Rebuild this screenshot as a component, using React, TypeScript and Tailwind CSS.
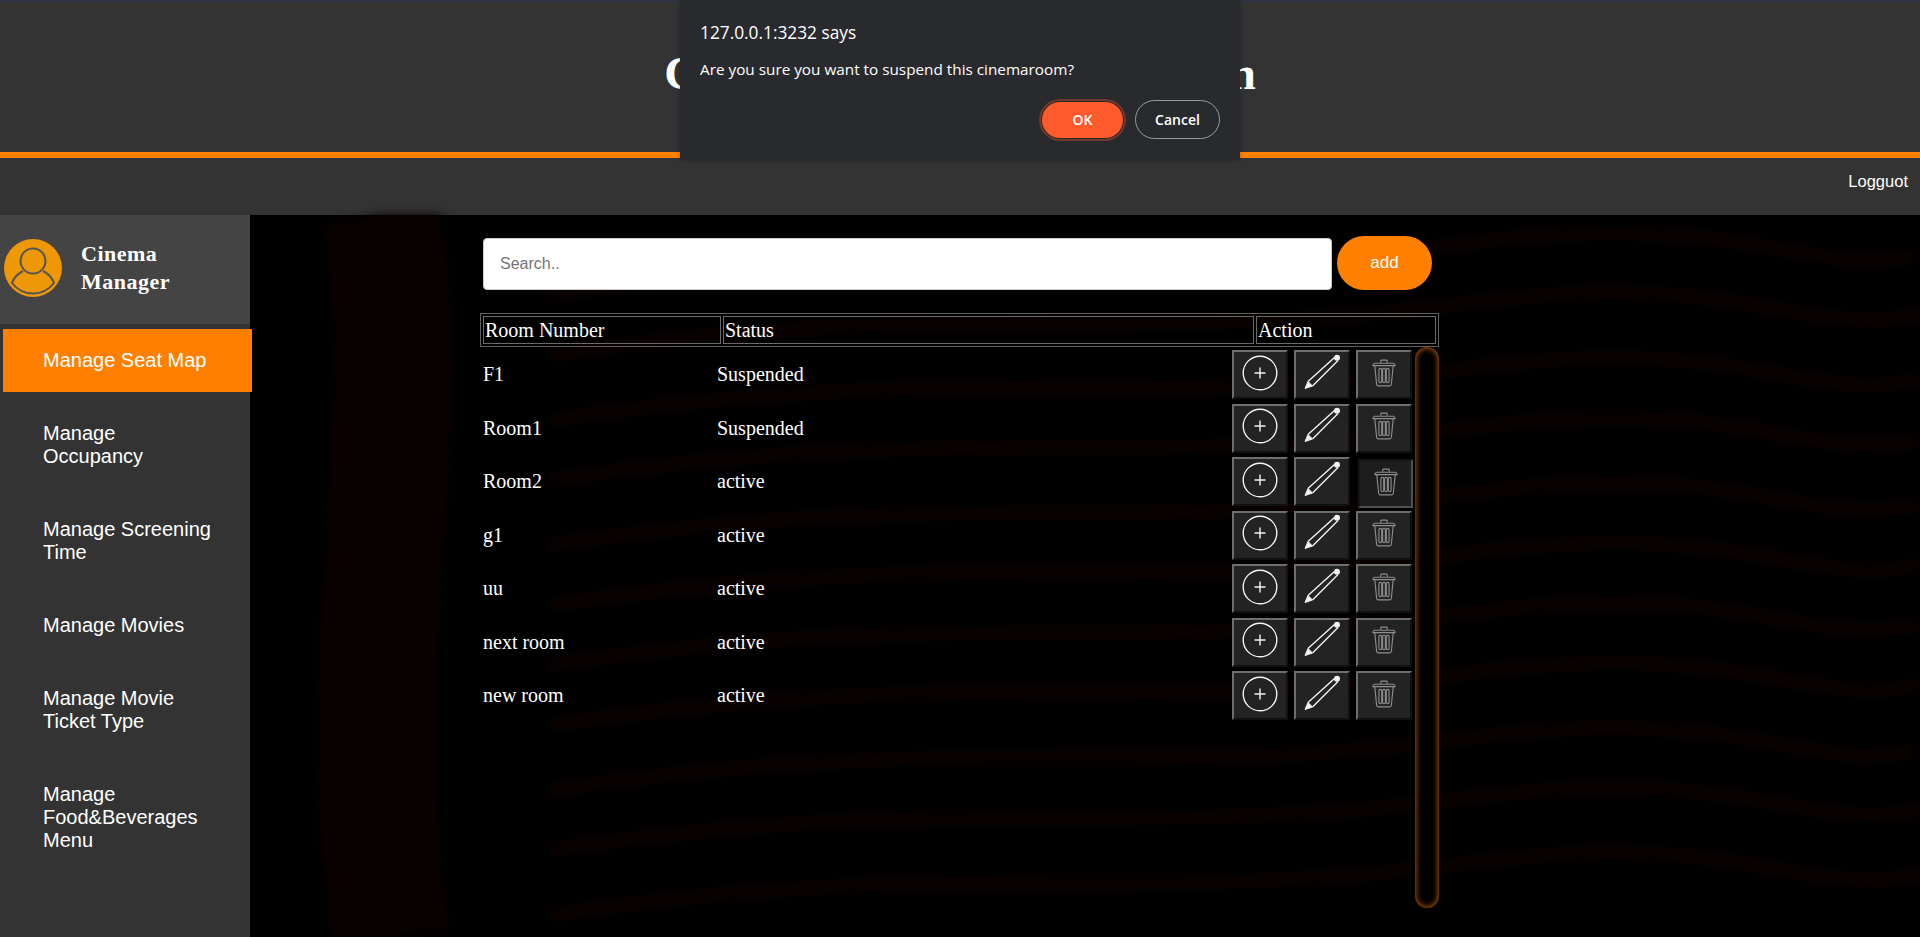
import React from 'react'

const menuItems = [
  'Manage Seat Map',
  'Manage Occupancy',
  'Manage Screening Time',
  'Manage Movies',
  'Manage Movie Ticket Type',
  'Manage Food&Beverages Menu',
]

const rooms = [
  { name: 'F1', status: 'Suspended' },
  { name: 'Room1', status: 'Suspended' },
  { name: 'Room2', status: 'active', pressed: true },
  { name: 'g1', status: 'active' },
  { name: 'uu', status: 'active' },
  { name: 'next room', status: 'active' },
  { name: 'new room', status: 'active' },
]

function PlusIcon() {
  return (
    <svg width="38" height="38" viewBox="0 0 38 38" fill="none" stroke="#f2f2f2">
      <circle cx="19" cy="19" r="16.8" strokeWidth="1.4" />
      <path d="M19 13.500v11M13.500 19h11" strokeWidth="1.4" />
    </svg>
  )
}

function PencilIcon() {
  return (
    <svg width="40" height="40" viewBox="0 0 40 40" fill="none" stroke="#f2f2f2">
      <path d="M6 28.500L32.500 4.500M10.500 33L36 7.500" strokeWidth="1.4" />
      <path d="M3 35.500L6 28.500L10.500 33z" fill="#f2f2f2" strokeWidth="1" strokeLinejoin="round" />
      <circle cx="35" cy="4.800" r="3" fill="#f2f2f2" stroke="none" />
    </svg>
  )
}

function TrashIcon() {
  return (
    <svg width="24" height="28" viewBox="0 0 26 30" fill="none" stroke="#8e8e8e" strokeWidth="1.2">
      <path d="M1 7c0-1.500 1-2.300 2-2.500l20-.1c1 .2 2 1 2 2.600z" />
      <path d="M9.500 4V2c0-.6.4-1 1-1h5c.6 0 1 .4 1 1v2" />
      <path d="M3 7l2 20c.1 1.200 1 2 2 2h12c1 0 1.900-.8 2-2l2-20" />
      <rect x="7.500" y="10" width="3" height="15.500" rx="1.500" />
      <rect x="11.500" y="10" width="3" height="15.500" rx="1.500" />
      <rect x="15.500" y="10" width="3" height="15.500" rx="1.500" />
    </svg>
  )
}

function ActionButton({ children, pressed }: { children: React.ReactNode; pressed?: boolean }) {
  return (
    <button
      className={`flex h-[49px] shrink-0 items-center justify-center border-2 pb-[4px] ${
        pressed
          ? 'ml-[2px] mt-[2px] w-[55px] border-t-[#141414] border-l-[#141414] border-r-[#505050] border-b-[#505050] bg-[#1d1d1d]'
          : 'w-[56px] border-t-[#6e6e6e] border-l-[#6e6e6e] border-r-[#101010] border-b-[#101010] bg-[#232323]'
      }`}
    >
      {children}
    </button>
  )
}

function Waves() {
  const lines = [40, 100, 165, 225, 290, 350, 410, 470, 535, 595, 660]
  return (
    <svg className="absolute inset-0 h-full w-full blur-[5px]" viewBox="0 0 1670 722" preserveAspectRatio="none" fill="none">
      {lines.map((y, i) => (
        <path
          key={i}
          d={`M300 ${y + 40} C 700 ${y - 20}, 900 ${y + 30}, 1200 ${y - 10} S 1550 ${y + 25}, 1670 ${y}`}
          stroke="#0b0200"
          strokeWidth="10"
        />
      ))}
      <path d="M130 0 C 170 200, 100 420, 140 722" stroke="#080100" strokeWidth="120" />
    </svg>
  )
}

export default function App() {
  return (
    <div className="relative flex h-screen flex-col overflow-hidden bg-black font-['Liberation_Sans',Arial,sans-serif] text-white">
      {/* Header */}
      <header className="h-[158px] shrink-0 border-t-2 border-b-[6px] border-t-[#2f3245] border-b-[#ff8000] bg-[#333]">
        <h1 className="pt-[44px] text-center font-['Liberation_Serif',serif] text-[47.4px] font-bold leading-[55px]">
          Cinema Manager Suspension
        </h1>
      </header>

      <nav className="flex h-[57px] shrink-0 items-center justify-end bg-[#333] pb-[10px] pr-3 text-[16.5px]">
        <a>Logguot</a>
      </nav>

      <div className="flex min-h-0 flex-1">
        {/* Sidebar */}
        <aside className="relative z-10 w-[250px] shrink-0 bg-[#333]">
          <div className="flex h-[109px] items-center bg-[#444] pb-[4px] pl-1">
            <div className="flex h-[58px] w-[58px] items-center justify-center rounded-full bg-[#ee9707]">
              <svg width="58" height="58" viewBox="0 0 58 58" fill="none" stroke="#555" strokeWidth="2">
                <circle cx="29" cy="22" r="12.500" />
                <path d="M19 32C14 34.500 10 38.500 8 44 13 50.500 20 54.500 29 54.500S45 50.500 50 44C48 38.500 44 34.500 39 32" />
              </svg>
            </div>
            <div className="ml-[19px] font-['Liberation_Serif',serif] text-[22px] font-bold leading-[28px] tracking-[0.5px]">
              Cinema
              <br />
              Manager
            </div>
          </div>
          <ul className="mt-[5px] flex flex-col gap-[10px] pl-[3px] text-[20px] leading-[23px]">
            {menuItems.map((item, i) => (
              <li key={item} className={`-mr-[2px] py-[20px] pl-10 ${i === 0 ? 'bg-[#ff8000]' : ''}`}>
                <div className="w-[172px]">{item}</div>
              </li>
            ))}
          </ul>
        </aside>

        {/* Main */}
        <main className="relative flex-1 bg-black font-['Liberation_Serif',serif]">
          <Waves />
          <div className="relative ml-[230px] w-[959px] pt-[21px]">
            <div className="flex h-[54px] items-center pl-[3px] font-['Liberation_Sans',Arial,sans-serif]">
              <input
                placeholder="Search.."
                className="mt-[2px] h-[52px] w-[849px] rounded border border-[#ccc] bg-white px-4 text-base text-black placeholder:text-[#757575]"
              />
              <button className="ml-[5px] h-[54px] w-[95px] rounded-full bg-[#ff8000] text-[17px] text-white">add</button>
            </div>

            <table className="mt-[23px] h-[34px] w-[959px] table-fixed border-separate border-spacing-[2px] border border-[#606060] text-[20px] leading-[23px]">
              <thead>
                <tr>
                  <th className="w-[238px] border border-[#6a6a6a] px-[1px] text-left font-normal">Room Number</th>
                  <th className="border border-[#6a6a6a] px-[1px] text-left font-normal">Status</th>
                  <th className="w-[180px] border border-[#6a6a6a] px-[1px] text-left font-normal">Action</th>
                </tr>
              </thead>
            </table>

            <div className="flex">
              <div className="flex-1 pl-[3px] pt-[1px]">
                {rooms.map(room => (
                  <div key={room.name} className="grid h-[53.5px] grid-cols-[234px_515px_auto] text-[20px] leading-[23px]">
                    <div className="pt-[15px]">{room.name}</div>
                    <div className="pt-[15px]">{room.status}</div>
                    <div className="flex gap-[6px] pt-[2px]">
                      <ActionButton>
                        <PlusIcon />
                      </ActionButton>
                      <ActionButton>
                        <PencilIcon />
                      </ActionButton>
                      <ActionButton pressed={room.pressed}>
                        <TrashIcon />
                      </ActionButton>
                    </div>
                  </div>
                ))}
              </div>
              <div className="h-[561px] w-[24px] shrink-0 rounded-full bg-black shadow-[inset_0_0_6px_#e07000]" />
            </div>
          </div>
        </main>
      </div>

      {/* Confirm dialog */}
      <div className="absolute left-[680px] top-0 h-[159px] w-[560px] bg-[#292a2d] font-['Open_Sans',sans-serif] shadow-[0_1px_4px_rgba(0,0,0,0.3)]">
        <div className="pl-[20px] pt-[22px] text-[17.3px] leading-[22px]">127.0.0.1:3232 says</div>
        <div className="pl-[20px] pt-[15px] text-[15.3px] leading-[20px]">Are you sure you want to suspend this cinemaroom?</div>
        <div className="absolute right-[20px] top-[100px] flex items-center gap-[12px] text-[14px] font-semibold">
          <button className="h-[36px] w-[81px] rounded-full bg-[#ff5a2b] ring-2 ring-[#6e3a2c] ring-offset-1 ring-offset-[#292a2d]">OK</button>
          <button className="h-[39px] w-[85px] rounded-full border border-[#9a9a9a]">Cancel</button>
        </div>
      </div>
    </div>
  )
}
